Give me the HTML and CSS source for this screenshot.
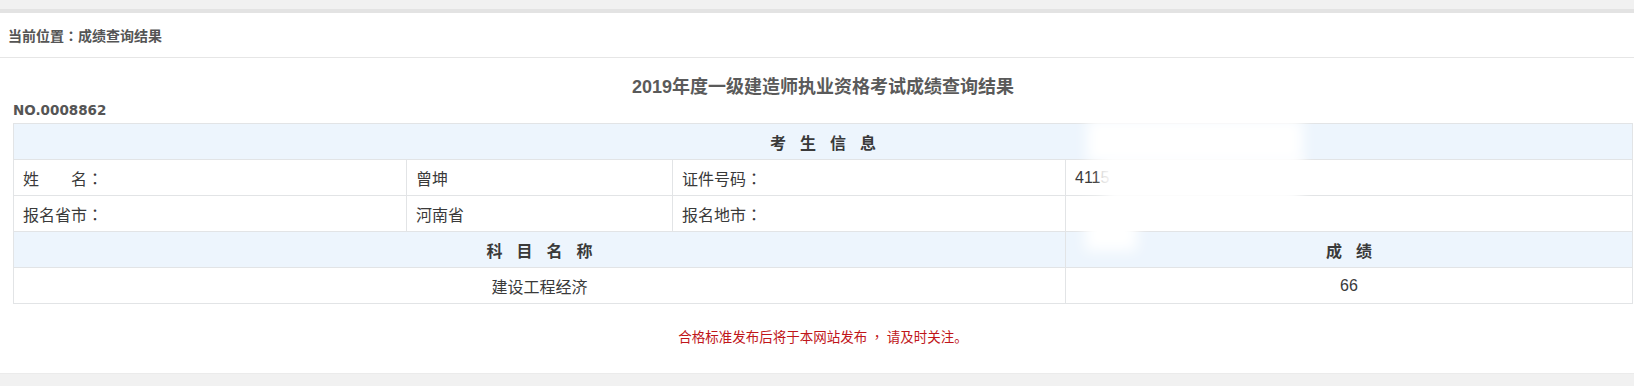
FILE: index.html
```html
<html>
  <head>
    <link rel="stylesheet" href="styles.css">
  </head>
  <body>
    <div class="panel">
      <div class="crumb">当前位置<span class="colon">：</span>成绩查询结果</div>
      <div class="content">
        <h2 class="title">2019年度一级建造师执业资格考试成绩查询结果</h2>
        <div class="serial">NO.0008862</div>
        <div class="table-wrap">
          <table class="score-table">
            <colgroup>
              <col class="c1" />
              <col class="c2" />
              <col class="c3" />
              <col />
            </colgroup>
            <tr class="head">
              <td colspan="4"><span class="spaced">考生信息</span></td>
            </tr>
            <tr>
              <td>姓&emsp;&emsp;名<span class="colon">：</span></td>
              <td>曾坤</td>
              <td>证件号码<span class="colon">：</span></td>
              <td class="num">411<span class="fade">5</span></td>
            </tr>
            <tr>
              <td>报名省市<span class="colon">：</span></td>
              <td>河南省</td>
              <td>报名地市<span class="colon">：</span></td>
              <td></td>
            </tr>
            <tr class="head">
              <td colspan="3"><span class="spaced">科目名称</span></td>
              <td><span class="spaced">成绩</span></td>
            </tr>
            <tr class="center">
              <td colspan="3">建设工程经济</td>
              <td class="num">66</td>
            </tr>
          </table>
          <!-- 证件号码打码 -->
          <div class="mask mask-a"></div>
          <div class="mask mask-b"></div>
          <div class="mask mask-c"></div>
        </div>
        <div class="notice">合格标准发布后将于本网站发布<span class="comma">，</span>请及时关注。</div>
      </div>
    </div>
    <div class="footer-band"></div>
  </body>
</html>
```

FILE: styles.css
```css
body {
  margin: 0;
  background: #f1f1f1;
  font-family: "Liberation Sans", "Noto Sans CJK SC", sans-serif;
  font-size: 13px;
  color: #3a3a3a;
  overflow: hidden;
}
.panel {
  margin-top: 9px;
  background: #fff;
  border-top: 4px solid #e3e3e3;
}
.crumb {
  height: 44px;
  line-height: 44px;
  padding-left: 8px;
  font-size: 14px;
  font-weight: bold;
  color: #555;
  border-bottom: 1px solid #e6e6e6;
}
.colon,
.comma {
  font-family: "Noto Sans CJK TC", sans-serif;
}
.comma {
  padding: 0 3px;
}
.content {
  padding: 0 1px 27px 13px;
}
.title {
  margin: 0;
  padding-top: 18px;
  line-height: 22px;
  font-size: 18px;
  font-weight: bold;
  color: #5a5a5a;
  text-align: center;
}
.serial {
  margin-top: 3px;
  line-height: 18px;
  font-family: "DejaVu Sans", sans-serif;
  font-size: 13.5px;
  font-weight: bold;
  color: #555;
}
.table-wrap {
  position: relative;
  margin-top: 4px;
}
.score-table {
  width: 100%;
  table-layout: fixed;
  border-collapse: collapse;
  border: 1px solid #e2e4e6;
}
.c1 {
  width: 393px;
}
.c2 {
  width: 266px;
}
.c3 {
  width: 393px;
}
.score-table td {
  height: 36px;
  padding: 0 9px;
  border: 1px solid #e2e4e6;
  vertical-align: middle;
}
.head td {
  background: #edf5fd;
  text-align: center;
  font-weight: bold;
}
.spaced {
  letter-spacing: 14px;
  padding-left: 14px;
}
.center td {
  text-align: center;
}
.num {
  font-family: "Liberation Sans", sans-serif;
}
.fade {
  color: #ccc;
}
.mask {
  position: absolute;
  background: #fff;
  filter: blur(7px);
}
.mask-a {
  left: 1074px;
  top: -4px;
  width: 216px;
  height: 44px;
}
.mask-b {
  left: 1092px;
  top: 34px;
  width: 196px;
  height: 46px;
}
.mask-c {
  left: 1072px;
  top: 78px;
  width: 52px;
  height: 50px;
}
.notice {
  margin-top: 22px;
  line-height: 20px;
  font-size: 13.5px;
  text-align: center;
  color: #c0161a;
  font-family: "Noto Sans CJK SC", sans-serif;
}
.footer-band {
  height: 14px;
  border-top: 1px solid #ebebeb;
  background: #f1f1f1;
}
```
